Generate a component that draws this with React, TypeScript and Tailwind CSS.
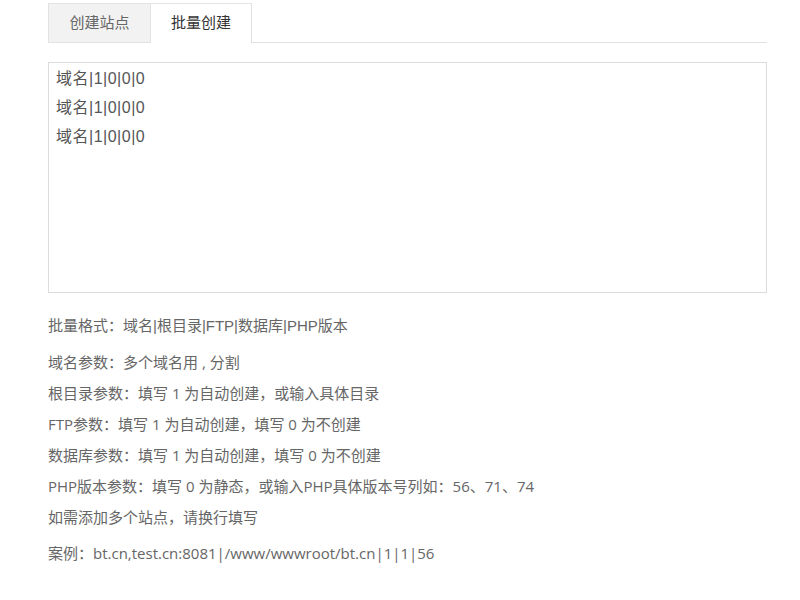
const helpLines = [
  "域名参数：多个域名用 , 分割",
  "根目录参数：填写 1 为自动创建，或输入具体目录",
  "FTP参数：填写 1 为自动创建，填写 0 为不创建",
  "数据库参数：填写 1 为自动创建，填写 0 为不创建",
  "PHP版本参数：填写 0 为静态，或输入PHP具体版本号列如：56、71、74",
  "如需添加多个站点，请换行填写",
]

export default function App() {
  return (
    <div
      className="w-[800px] h-[600px] bg-white pl-[48px] pt-[3px]"
      style={{ fontFamily: '"Liberation Sans", "Noto Sans CJK SC", sans-serif' }}
    >
      <div className="w-[719px]">
        {/* tabs */}
        <div className="flex border-b border-[#e2e2e2] h-[40px]">
          <div className="w-[103px] h-[40px] flex items-center justify-center bg-[#f2f2f2] border border-[#e2e2e2] text-[15px] text-[#666]">
            创建站点
          </div>
          <div className="w-[101px] h-[40px] -mb-px flex items-center justify-center bg-white border-t border-r border-[#e2e2e2] text-[15px] text-[#333]">
            批量创建
          </div>
        </div>

        {/* textarea */}
        <textarea
          className="mt-[19px] block w-[719px] h-[231px] border border-[#dcdcdc] px-[7px] pt-[1px] text-[16px] tracking-[0.5px] leading-[29px] text-[#555] resize-none outline-none"
          defaultValue={"域名|1|0|0|0\n域名|1|0|0|0\n域名|1|0|0|0"}
          style={{ fontFamily: '"Liberation Sans", "Noto Sans CJK SC", sans-serif' }}
        />

        {/* help */}
        <div
          className="mt-[17px] text-[15px] text-[#666] leading-[31px]"
          style={{ fontFamily: '"Open Sans", "Noto Sans CJK SC", sans-serif' }}
        >
          <p
            className="mb-[6px]"
            style={{ fontFamily: '"Liberation Sans", "Noto Sans CJK SC", sans-serif' }}
          >
            批量格式：域名|根目录|FTP|数据库|PHP版本
          </p>
          {helpLines.map((l) => (
            <p key={l}>{l}</p>
          ))}
          <p className="mt-[5px]">案例：bt.cn,test.cn:8081|/www/wwwroot/bt.cn|1|1|56</p>
        </div>
      </div>
    </div>
  )
}
